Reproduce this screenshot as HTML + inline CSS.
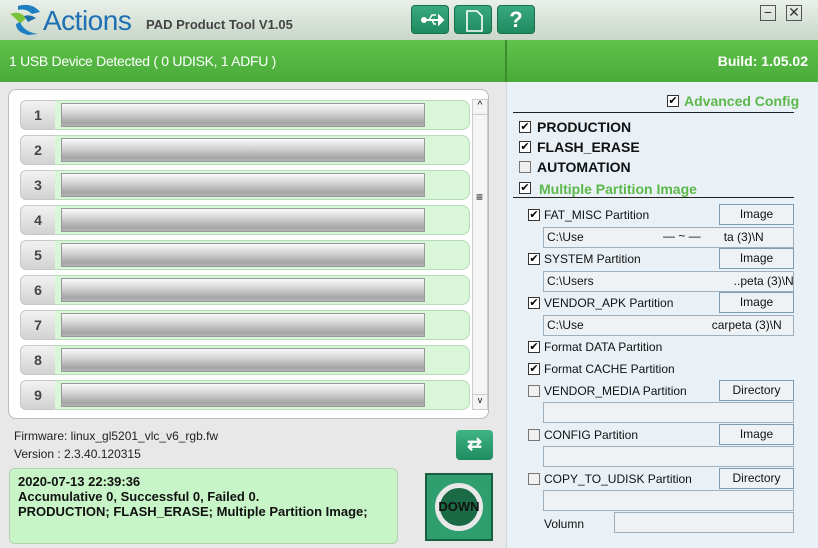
<!DOCTYPE html>
<html><head><meta charset="utf-8"><style>
*{margin:0;padding:0;box-sizing:border-box}
body{width:818px;height:548px;overflow:hidden;font-family:"Liberation Sans",Arial,sans-serif;position:relative;background:#e8e8e8}
.a{position:absolute}
.hdr{left:0;top:0;width:818px;height:40px;background:linear-gradient(#eaf0ea,#c9d6c9)}
.gbar{left:0;top:40px;width:818px;height:42px;background:linear-gradient(#5fc24a,#4aab3a);color:#fff;font-size:14px}
.tb{width:38px;height:29px;border-radius:4px;background:linear-gradient(#3aa880,#1f8a60);border:1px solid #17704c;top:5px}
.list{left:8px;top:89px;width:481px;height:330px;background:#fff;border:1px solid #bbb;border-radius:8px}
.num{width:36px;height:30px;border-radius:6px 0 0 6px;background:linear-gradient(#f2f2f2,#d2d2d2);border:1px solid #c8c8c8;font-weight:bold;font-size:14px;color:#444;text-align:center;line-height:28px}
.fld{height:30px;width:415px;background:#d9f6d9;border:1px solid #b8dcb8;border-left:none;border-radius:0 8px 8px 0}
.bar{height:24px;width:364px;background:linear-gradient(#fafafa 0%,#d5d5d5 40%,#a5a5a5 85%,#b5b5b5);border:1px solid #999}
.right{left:506px;top:82px;width:312px;height:466px;background:#e9f1f6;border-left:1px solid #cfd9df}
.cb{width:12px;height:12px;border:1px solid #333;background:#fff;font-size:11px;line-height:10px;text-align:center;color:#000}
.cb.e{background:#f0f0f0;border-color:#777}
.lbl{font-size:12px;color:#111}
.big{font-size:14px;font-weight:bold;color:#111}
.btn{width:75px;height:21px;border:1px solid #7a9cb5;background:#eef2f4;font-size:12px;text-align:center;line-height:18px;color:#111}
.inp{left:543px;width:251px;height:21px;border:1px solid #9eb0bd;background:#eef2f4;font-size:12px;line-height:19px;padding-left:3px;color:#111;overflow:hidden;white-space:nowrap}
.ln{height:1px;background:#222}
</style></head><body>
<div class="a hdr"></div>
<svg class="a" style="left:6px;top:4px" width="40" height="32" viewBox="0 0 40 32"><path d="M4 10 Q14 6 20 14 L14 20 Q10 14 4 10Z" fill="#7cc23a"/><path d="M12 2 Q26 -2 34 8 L26 10 Q20 4 12 6Z" fill="#1e7fc3"/><path d="M14 18 Q18 28 32 30 L22 31 Q10 28 10 20Z" fill="#1e7fc3"/><path d="M18 12 Q24 10 30 14 L22 18Z" fill="#1a6fa8"/></svg>
<div class="a" style="left:43px;top:5px;font-size:28px;color:#1e6fb3;letter-spacing:-0.5px">Actions</div>
<div class="a" style="left:146px;top:17px;font-size:13px;font-weight:bold;color:#444">PAD Product Tool V1.05</div>
<div class="a tb" style="left:411px"><svg width="38" height="29"><circle cx="12" cy="14" r="3" fill="#fff"/><path d="M12 14H27M27 10L31 14L27 18Z" stroke="#fff" stroke-width="2" fill="#fff"/><path d="M17 14L20 9H24M20 14L22 18H24" stroke="#fff" stroke-width="1.5" fill="none"/></svg></div>
<div class="a tb" style="left:454px"><svg width="38" height="29"><path d="M12 5H22L27 10V25H12Z" fill="none" stroke="#fff" stroke-width="1.6"/></svg></div>
<div class="a tb" style="left:497px;color:#fff;font-size:22px;font-weight:bold;text-align:center;line-height:27px">?</div>
<div class="a" style="left:760px;top:5px;width:16px;height:16px;border:1px solid #555;font-size:14px;line-height:12px;text-align:center;color:#333">−</div>
<div class="a" style="left:786px;top:5px;width:16px;height:16px;border:1px solid #555;font-size:14px;line-height:13px;text-align:center;color:#333">✕</div>
<div class="a gbar"><div class="a" style="left:9px;top:13px;letter-spacing:-0.3px">1 USB Device Detected ( 0 UDISK, 1 ADFU )</div><div class="a" style="left:505px;top:0;width:2px;height:42px;background:#3d8a30"></div><div class="a" style="right:10px;top:13px;font-weight:bold">Build: 1.05.02</div></div>
<div class="a list"></div>
<div class="a" style="left:472px;top:99px;width:16px;height:311px;background:#f4f4f4;border:1px solid #ccc"><div style="height:15px;border-bottom:1px solid #ccc;font-size:10px;text-align:center">^</div><div style="position:absolute;top:90px;left:3px;font-size:12px">≡</div><div style="position:absolute;bottom:0;height:15px;width:100%;font-size:9px;text-align:center;border-top:1px solid #ccc">v</div></div>
<div id="rows"></div>
<div class="a" style="left:14px;top:429px;font-size:12px;color:#222">Firmware: linux_gl5201_vlc_v6_rgb.fw</div>
<div class="a" style="left:14px;top:447px;font-size:12px;color:#222">Version : 2.3.40.120315</div>
<div class="a" style="left:456px;top:430px;width:37px;height:30px;border-radius:4px;background:linear-gradient(#3fb585,#1f8a60);color:#fff;text-align:center;font-size:18px;line-height:28px;font-weight:bold">⇄</div>
<div class="a" style="left:9px;top:468px;width:389px;height:76px;background:#c8f5c8;border:1px solid #b0d0b0;border-radius:6px;font-size:13px;font-weight:bold;color:#111;padding:5px 8px;line-height:15px">2020-07-13 22:39:36<br>Accumulative 0, Successful 0, Failed 0.<br>PRODUCTION; FLASH_ERASE; Multiple Partition Image;</div>
<div class="a" style="left:425px;top:473px;width:68px;height:68px;background:#2f9f70;border:2px solid #1c5f40"><div style="position:absolute;left:8px;top:8px;width:48px;height:48px;border-radius:50%;border:5px solid #e8e8e8;background:#1a6a45;"></div><div style="position:absolute;left:0;top:24px;width:64px;text-align:center;font-weight:bold;font-size:13px;color:#111">DOWN</div></div>
<div class="a right"></div>
<div class="a cb" style="left:667px;top:95px">✔</div><div class="a" style="left:684px;top:93px;font-size:14px;font-weight:bold;color:#5cb84a">Advanced Config</div>
<div class="a ln" style="left:513px;top:112px;width:281px"></div>
<div class="a cb" style="left:519px;top:121px">✔</div><div class="a big" style="left:537px;top:119px">PRODUCTION</div>
<div class="a cb" style="left:519px;top:141px">✔</div><div class="a big" style="left:537px;top:139px">FLASH_ERASE</div>
<div class="a cb e" style="left:519px;top:161px"></div><div class="a big" style="left:537px;top:159px">AUTOMATION</div>
<div class="a cb" style="left:519px;top:182px">✔</div><div class="a" style="left:539px;top:181px;font-size:14px;font-weight:bold;color:#5cb84a">Multiple Partition Image</div>
<div class="a ln" style="left:513px;top:197px;width:281px"></div>
<div class="a cb" style="left:528px;top:209px">✔</div><div class="a lbl" style="left:544px;top:208px">FAT_MISC Partition</div><div class="a btn" style="left:719px;top:204px">Image</div>
<div class="a inp" style="top:227px">C:\Use<span style="display:inline-block;width:140px"></span>ta (3)\N</div>
<div class="a inp" style="top:227px;left:660px;width:100px;border:none;background:none">— ~ —</div>
<div class="a cb" style="left:528px;top:253px">✔</div><div class="a lbl" style="left:544px;top:252px">SYSTEM Partition</div><div class="a btn" style="left:719px;top:248px">Image</div>
<div class="a inp" style="top:271px">C:\Users<span style="display:inline-block;width:140px"></span>..peta (3)\N</div>
<div class="a cb" style="left:528px;top:297px">✔</div><div class="a lbl" style="left:544px;top:296px">VENDOR_APK Partition</div><div class="a btn" style="left:719px;top:292px">Image</div>
<div class="a inp" style="top:315px">C:\Use<span style="display:inline-block;width:128px"></span>carpeta (3)\N</div>
<div class="a cb" style="left:528px;top:341px">✔</div><div class="a lbl" style="left:544px;top:340px">Format DATA Partition</div>
<div class="a cb" style="left:528px;top:363px">✔</div><div class="a lbl" style="left:544px;top:362px">Format CACHE Partition</div>
<div class="a cb e" style="left:528px;top:385px"></div><div class="a lbl" style="left:544px;top:384px">VENDOR_MEDIA Partition</div><div class="a btn" style="left:719px;top:380px">Directory</div>
<div class="a inp" style="top:402px"></div>
<div class="a cb e" style="left:528px;top:429px"></div><div class="a lbl" style="left:544px;top:428px">CONFIG Partition</div><div class="a btn" style="left:719px;top:424px">Image</div>
<div class="a inp" style="top:446px"></div>
<div class="a cb e" style="left:528px;top:473px"></div><div class="a lbl" style="left:544px;top:472px">COPY_TO_UDISK Partition</div><div class="a btn" style="left:719px;top:468px">Directory</div>
<div class="a inp" style="top:490px"></div>
<div class="a lbl" style="left:544px;top:517px">Volumn</div>
<div class="a inp" style="left:614px;width:180px;top:512px"></div>
<script>
var h='';for(var i=0;i<9;i++){var y=100+i*35;h+='<div class="a num" style="left:20px;top:'+y+'px">'+(i+1)+'</div><div class="a fld" style="left:55px;top:'+y+'px"></div><div class="a bar" style="left:61px;top:'+(y+3)+'px"></div>';}
document.getElementById('rows').innerHTML=h;
</script>
</body></html>
